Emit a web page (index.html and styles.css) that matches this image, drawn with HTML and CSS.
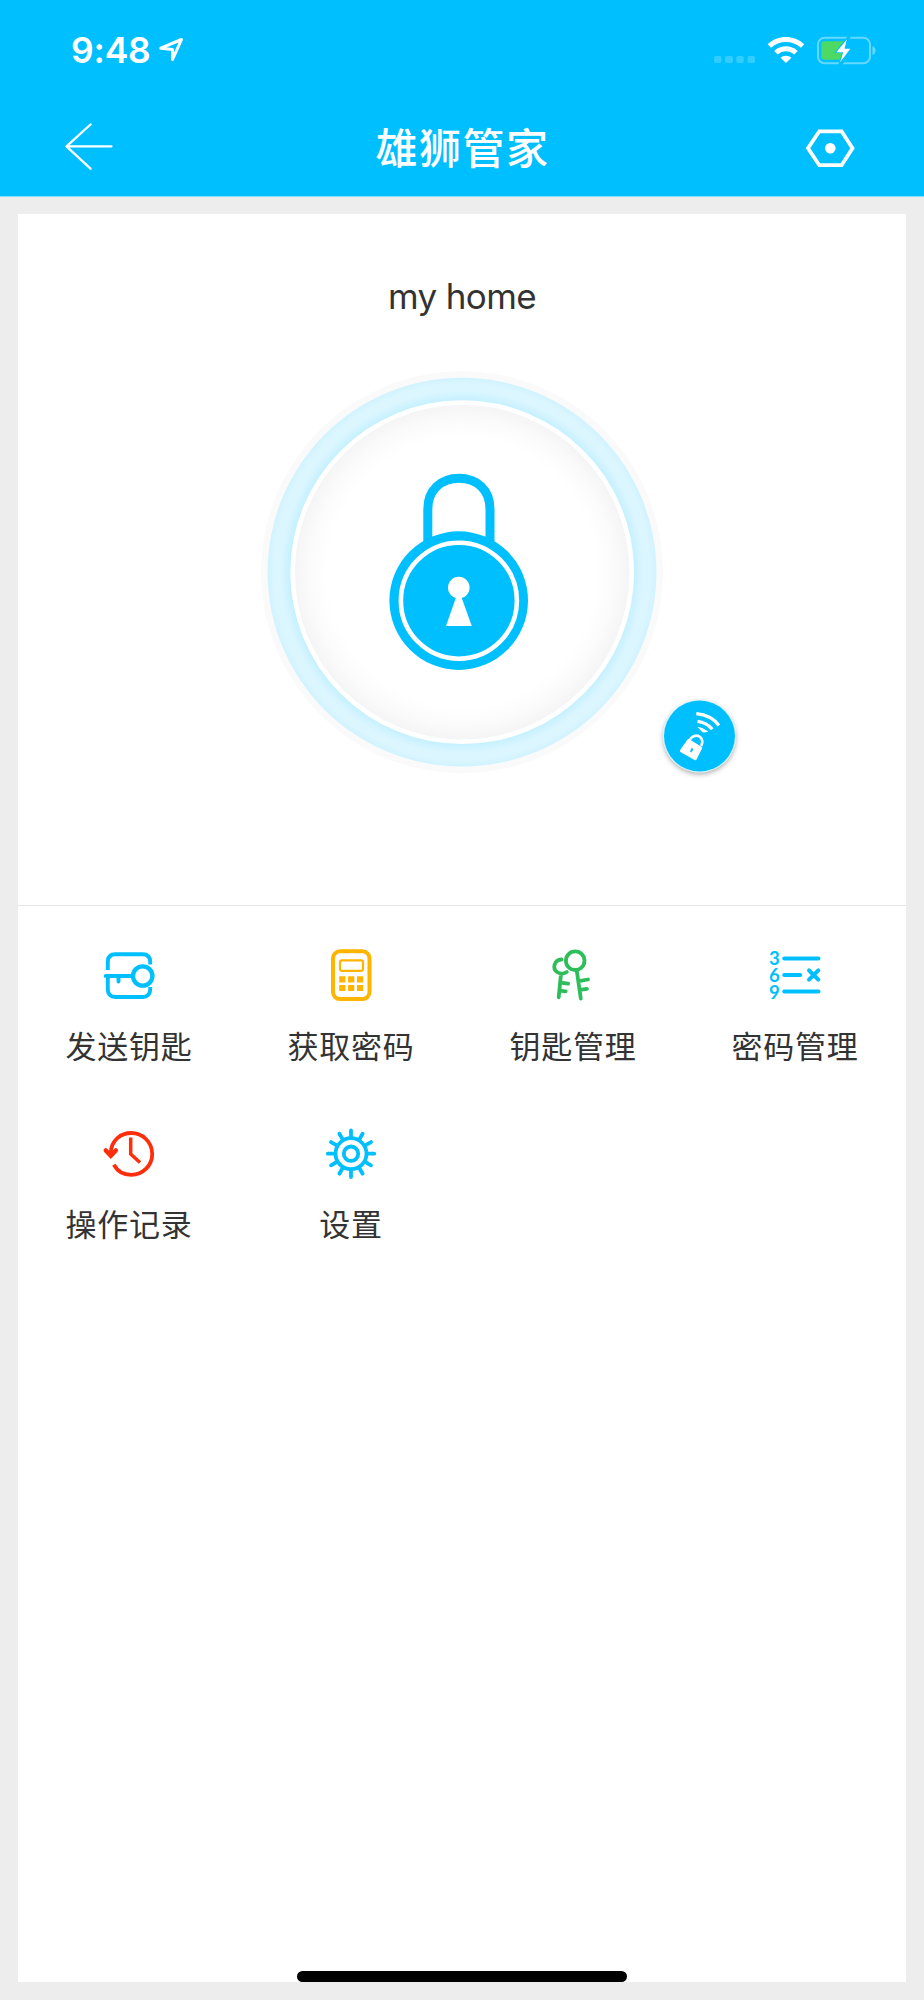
FILE: index.html
```html
<!DOCTYPE html>
<html lang="zh-CN">
<head>
<meta charset="utf-8">
<title>雄狮管家</title>
<link rel="stylesheet" href="styles.css">
</head>
<body>
<header class="header">
  <div class="status">
    <div class="status-left">
      <span class="time">9:48</span>
      <svg class="location" viewBox="158 38 26 26" fill="none" stroke="#fff" stroke-width="3" stroke-linejoin="round"><path d="M160.8 49.2L181.5 40.5L172.5 60.5V50.5Z"/></svg>
    </div>
    <svg class="indicators" viewBox="712 34 166 32">
      <g fill="#fff" opacity=".2"><rect x="714" y="56" width="7.5" height="7" rx="2"/><rect x="725" y="56" width="8" height="7" rx="2"/><rect x="736.3" y="56" width="7.5" height="7" rx="2"/><rect x="747.5" y="56" width="7.5" height="7" rx="2"/></g>
      <path d="M767.7 44.3C778 34.6 793.8 34.6 804.2 44.3L801 47.8C792.5 40 779.5 40 771 47.8ZM774.2 51C780.5 44.8 791.3 44.8 797.7 51L794.2 54.5C789.5 50 782.3 50 777.7 54.5ZM780.5 57.8C783.3 54.900 788.5 54.9 791.4 57.8L786 63.1Z" fill="#fff"/>
      <rect x="818" y="37.8" width="52" height="25.4" rx="6.5" fill="none" stroke="#fff" stroke-opacity=".4" stroke-width="2"/>
      <path d="M872.5 46v9c4-1.200 4-7.800 0-9Z" fill="#fff" opacity=".4"/>
      <rect x="821.300" y="41.300" width="25.500" height="18.500" rx="3" fill="#4cd964"/>
      <path d="M848 36L834.300 53H842.200L838.300 65H842L853 48.500H847L850.800 36Z" fill="#00bfff"/>
      <path d="M846.800 39.500L836.300 52.300H843.200L840.200 62.300L850.300 48.800H844.500Z" fill="#fff"/>
    </svg>
  </div>
  <nav class="nav">
    <svg class="back" viewBox="64 122 52 50" fill="none" stroke="#fff" stroke-width="2.300" stroke-linecap="round" stroke-linejoin="round"><path d="M90.500 123.500L66.500 145.300L90.500 167.700M66.500 145.300H111.500"/></svg>
    <h1 class="title">雄狮管家</h1>
    <svg class="more" viewBox="804 126 52 44"><path d="M819.300 131.300H841.600L852.500 148.200L841.600 165.200H819.300L808 148.200Z" fill="none" stroke="#fff" stroke-width="3.800"/><circle cx="830.300" cy="148.200" r="5.300" fill="#fff"/></svg>
  </nav>
</header>
<main class="card">
  <section class="hero">
    <h2 class="lock-name">my home</h2>
    <svg class="lock" viewBox="258 368 484 412">
      <defs>
        <radialGradient id="ring" gradientUnits="userSpaceOnUse" cx="462" cy="572.200" r="194.500">
          <stop offset=".88" stop-color="#c3f0ff"/><stop offset=".905" stop-color="#d0f3ff"/><stop offset=".935" stop-color="#dcf6ff"/><stop offset=".965" stop-color="#dcf6ff"/><stop offset="1" stop-color="#d0f3ff"/>
        </radialGradient>
        <radialGradient id="disc" gradientUnits="userSpaceOnUse" cx="462" cy="572.200" r="167.300">
          <stop offset=".8" stop-color="#fff"/><stop offset=".91" stop-color="#fbfbfb"/><stop offset="1" stop-color="#f5f5f5"/>
        </radialGradient>
        <filter id="shadow" x="-30%" y="-30%" width="160%" height="160%"><feDropShadow dx="0" dy="2" stdDeviation="2.500" flood-color="#000" flood-opacity=".32"/></filter>
      </defs>
      <circle cx="462" cy="572.200" r="201" fill="#fafafa"/>
      <circle cx="462" cy="572.200" r="194.400" fill="url(#ring)"/>
      <circle cx="462.200" cy="572.200" r="171.900" fill="#fff"/>
      <circle cx="462.200" cy="572.200" r="167.300" fill="url(#disc)"/>
      <path d="M427.800 550V509C427.800 490 441 478.200 459 478.200S490 490 490 509V550" fill="none" stroke="#00bfff" stroke-width="9"/>
      <circle cx="458.700" cy="600.600" r="69.300" fill="#00bfff"/>
      <circle cx="458.900" cy="600.700" r="58" fill="none" stroke="#fff" stroke-width="4.600"/>
      <circle cx="458.800" cy="587.600" r="10.800" fill="#fff"/>
      <path d="M456.500 596H461L471.800 625.900H446Z" fill="#fff"/>
      <g filter="url(#shadow)"><circle cx="699.500" cy="736" r="36.300" fill="#d5f4ff"/></g>
      <circle cx="699.500" cy="736" r="35.500" fill="#00bfff"/>
      <g fill="none" stroke="#fff">
        <path d="M696.300 713.700Q711 715 719 725.500" stroke-width="3.300"/>
        <path d="M697.500 721.300Q706.500 722.300 712.300 729.200" stroke-width="3.300"/>
        <path d="M699.500 728Q702 728.400 706.500 731.300Q703.500 732 702.500 731.300Z" fill="#fff" stroke-width="1.500"/>
        <path d="M689.500 740.500C691.500 735.500 697 734.300 700.300 737.200C703 739.500 702.500 743 701.300 746" stroke-width="2.600"/>
      </g>
      <path d="M687.500 739.500Q688.300 738.700 689.300 739.300L701.500 746.800Q702.500 747.500 702 748.500L696.500 759.500Q695.800 760.700 694.500 760L680.500 752Q679.500 751 680.200 750Z" fill="#fff"/>
      <path d="M691.500 748.300l1.500 .8-.5 1.500-1.200 1.600-.8-.5.500-1.800Z" stroke="#00bfff" stroke-width=".6" fill="#00bfff"/>
    </svg>
  </section>
  <section class="menu">
    <a class="item">
      <svg class="icon" viewBox="101 948 56 56" fill="none" stroke="#00bfff" stroke-width="3.900"><path d="M107.800 970V962Q107.800 954.300 115.500 954.300H142.500Q150.200 954.300 150.200 962V964.500M107.800 976V989.300Q107.800 997 115.500 997H142.500Q150.200 997 150.200 989.300V987"/><circle cx="142.700" cy="976" r="9.700" stroke-width="4.300"/><path d="M105.700 976H133M118.500 976V981.500" stroke-linecap="round"/></svg>
      <span class="label">发送钥匙</span>
    </a>
    <a class="item">
      <svg class="icon" viewBox="323 948 56 56"><rect x="333" y="951.300" width="36.500" height="47.800" rx="7" fill="none" stroke="#ffb400" stroke-width="4"/><rect x="340" y="960.300" width="23" height="10.500" rx="2" fill="none" stroke="#ffb400" stroke-width="2.200"/><path d="M339.200 976.200h6.200v6.200h-6.200zM348.100 976.200h6.200v6.200h-6.200zM357 976.200h6.200v6.200h-6.200zM339.200 984.900h6.200v6.200h-6.200zM348.100 984.900h6.200v6.200h-6.200zM357 984.900h6.200v6.200h-6.200z" fill="#ffb400"/></svg>
      <span class="label">获取密码</span>
    </a>
    <a class="item">
      <svg class="icon" viewBox="545 948 56 56" fill="none" stroke="#2dbe5b" stroke-width="3.800" stroke-linecap="round"><circle cx="575.200" cy="960.700" r="9.300"/><path d="M576.800 971L580.800 998.500M578.800 981.200L588 979.500M580 989.800L587 988.800M561.500 959.500C553.500 960 552.500 969 557 972C561 974.500 564.500 973.500 566.800 972M561 974L558.700 997.300M560.300 982.700L568.200 983.700M559.800 990.700L565.700 991.300"/></svg>
      <span class="label">钥匙管理</span>
    </a>
    <a class="item">
      <svg class="icon" viewBox="767 948 56 56"><g class="digits"><text x="769" y="965">3</text><text x="769" y="981.900">6</text><text x="769" y="998.500">9</text></g><path d="M784.200 958.500H818.500M784.200 975H800.300M784.200 991.500H818.500M809 970.300L818.300 979.700M818.300 970.300L809 979.700" fill="none" stroke="#00bfff" stroke-width="4" stroke-linecap="round"/></svg>
      <span class="label">密码管理</span>
    </a>
    <a class="item">
      <svg class="icon" viewBox="101 1126 56 56" fill="none" stroke="#ff2d0a" stroke-width="3.800"><path d="M110.800 1152.500C111.300 1140 121 1133 131.200 1133C142.500 1133 152.200 1142 152.200 1154C152.200 1165.500 143 1174.800 131.200 1174.800C124 1174.800 117.500 1171.300 113.800 1164.700"/><path d="M105.800 1150.500L110.800 1155.800L115.800 1150.500" stroke-linecap="round" stroke-width="4.500"/><path d="M130.700 1137.500V1154L140 1162.500" stroke-width="3.500"/></svg>
      <span class="label">操作记录</span>
    </a>
    <a class="item">
      <svg class="icon" viewBox="323 1126 56 56" fill="none" stroke="#00bfff" stroke-width="3.800" stroke-linecap="round"><circle cx="351" cy="1153.700" r="15.500"/><circle cx="351" cy="1153.700" r="7.200"/><path d="M351 1137V1130.500M351 1170.500V1177M367.500 1153.700H374.200M334.500 1153.700H327.800M359.300 1139.400L362.600 1133.700M365.300 1145.400L371 1142.100M365.300 1162L371 1165.300M359.300 1168L362.600 1173.700M342.700 1168L339.400 1173.700M336.700 1162L331 1165.300M336.700 1145.400L331 1142.100M342.700 1139.400L339.400 1133.700"/></svg>
      <span class="label">设置</span>
    </a>
  </section>
</main>
<div class="home-bar"></div>
</body>
</html>
```

FILE: styles.css
```css
* { box-sizing: border-box; }
body {
  margin: 0;
  height: 2000px;
  overflow: hidden;
  background: #ededed;
  color: #333;
  font-family: Inter, "Noto Sans CJK SC", sans-serif;
}
svg { display: block; flex: none; }
.header {
  height: 197px;
  background: #00bfff;
  color: #fff;
  border-bottom: 1px solid #7fdcfb;
}
.status {
  height: 100px;
  padding: 0 46px 0 71px;
  display: flex;
  align-items: center;
  justify-content: space-between;
}
.status-left { display: flex; align-items: center; gap: 7px; }
.time {
  width: 80px;
  padding-top: 2px;
  font-size: 35.5px;
  line-height: 42px;
  font-weight: 600;
  letter-spacing: -0.2px;
  white-space: nowrap;
}
.location { width: 26px; height: 26px; }
.indicators { width: 166px; height: 32px; }
.nav {
  height: 96px;
  padding: 0 68px 0 64px;
  display: grid;
  grid-template-columns: 52px 1fr 52px;
  align-items: center;
}
.back { width: 52px; height: 50px; }
.more { width: 52px; height: 44px; }
.title {
  margin: 0;
  padding: 0 0 5px 5px;
  text-align: center;
  font: 500 42px/60px "Noto Sans CJK SC", sans-serif;
  letter-spacing: 1.5px;
}
.card {
  height: 1768px;
  margin: 17px 18px 0;
  background: #fff;
}
.hero {
  height: 692px;
  padding-top: 56px;
  border-bottom: 1px solid #e6e6e6;
}
.lock-name {
  margin: 0;
  height: 52px;
  text-align: center;
  font-size: 35px;
  line-height: 52px;
  font-weight: 400;
  letter-spacing: -0.6px;
}
.lock { width: 484px; height: 412px; margin: 46px 0 0 240px; }
.menu {
  padding-top: 42px;
  display: grid;
  grid-template-columns: repeat(4, 222px);
  grid-auto-rows: 178px;
}
.item { display: flex; flex-direction: column; align-items: center; }
.icon { width: 56px; height: 56px; }
.label {
  margin-top: 19px;
  font: 400 31px/44px "Noto Sans CJK SC", sans-serif;
  letter-spacing: 0.8px;
}
.digits { fill: #00bfff; font: 700 18.5px Lato, sans-serif; }
.home-bar {
  position: absolute;
  left: 297px;
  top: 1971px;
  width: 330px;
  height: 11px;
  border-radius: 5.5px;
  background: #000;
}
```
